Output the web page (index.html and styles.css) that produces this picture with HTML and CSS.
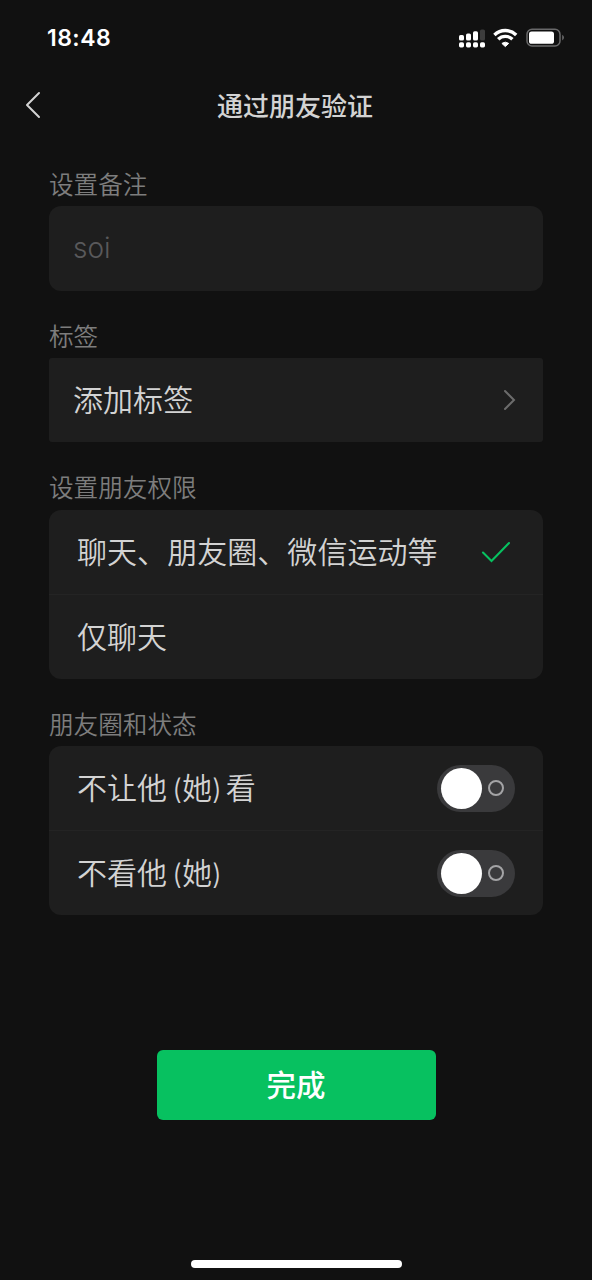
FILE: index.html
```html
<!DOCTYPE html>
<html lang="zh-CN">
<head>
<meta charset="utf-8">
<meta name="viewport" content="width=device-width, initial-scale=1">
<title>通过朋友验证</title>
<link rel="stylesheet" href="styles.css">
</head>
<body>
<div class="screen">
  <div class="status">
    <span class="time">18:48</span>
    <svg class="status-icons" width="108" height="22" viewBox="0 0 108 22">
      <g fill="#fff">
        <rect x="1" y="8" width="5" height="5.6" rx="1.6"/>
        <rect x="8" y="6.6" width="5" height="7" rx="1.6"/>
        <rect x="15" y="4.2" width="5" height="9.4" rx="1.6"/>
        <rect x="22" y="2.4" width="5" height="11.2" rx="1.6" fill="#3d3d3d"/>
        <rect x="1" y="15.2" width="5" height="5.2" rx="1.6"/>
        <rect x="8" y="15.2" width="5" height="5.2" rx="1.6"/>
        <rect x="15" y="15.2" width="5" height="5.2" rx="1.6"/>
        <rect x="22" y="15.2" width="5" height="5.2" rx="1.6"/>
        <path d="M43.9 16.4Q47.3 13.9 50.7 16.4L47.3 19.6Z" stroke="#fff" stroke-width="1" stroke-linejoin="round"/>
      </g>
      <g fill="none" stroke="#fff" stroke-width="3.4">
        <path d="M36.4 7.9A15.8 15.8 0 0 1 58.2 7.9"/>
        <path d="M40.2 12.3A10 10 0 0 1 54.4 12.3"/>
      </g>
      <rect x="69" y="2.2" width="33" height="16.8" rx="5" fill="none" stroke="#69696a" stroke-width="1.5"/>
      <rect x="71" y="4.4" width="25" height="12.4" rx="2.6" fill="#fff"/>
      <path d="M104.2 7.8Q106 8.8 106 10.6T104.2 13.4Z" fill="#69696a"/>
    </svg>
  </div>
  <header class="nav">
    <svg class="back" width="16" height="28" viewBox="0 0 16 28"><path d="M14 2L2 14L14 26" fill="none" stroke="#d3d3d3" stroke-width="2" stroke-linecap="round" stroke-linejoin="round"/></svg>
    <h1 class="title">通过朋友验证</h1>
  </header>
  <main class="form">
    <section class="section">
      <h2 class="label">设置备注</h2>
      <div class="card"><div class="row row-tight"><span class="placeholder">soi</span></div></div>
    </section>
    <section class="section">
      <h2 class="label">标签</h2>
      <div class="card card-square"><div class="row row-tight"><span class="text">添加标签</span>
        <svg class="chevron" width="14" height="22" viewBox="0 0 14 22"><path d="M2 2L11 11L2 20" fill="none" stroke="#6c6c6c" stroke-width="2" stroke-linecap="round"/></svg>
      </div></div>
    </section>
    <section class="section">
      <h2 class="label">设置朋友权限</h2>
      <div class="card">
        <div class="row"><span class="text">聊天、朋友圈、微信运动等</span>
          <svg class="check" width="30" height="22" viewBox="0 0 30 22"><path d="M2 11.5L10.5 20L28 2" fill="none" stroke="#07c160" stroke-width="2.1" stroke-linecap="round"/></svg>
        </div>
        <div class="row"><span class="text">仅聊天</span></div>
      </div>
    </section>
    <section class="section">
      <h2 class="label">朋友圈和状态</h2>
      <div class="card">
        <div class="row"><span class="text">不让他<span class="paren open">(</span>她<span class="paren close">)</span>看</span><span class="switch"><span class="knob"></span><span class="ring"></span></span></div>
        <div class="row"><span class="text">不看他<span class="paren open">(</span>她<span class="paren close">)</span></span><span class="switch"><span class="knob"></span><span class="ring"></span></span></div>
      </div>
    </section>
  </main>
  <button class="done">完成</button>
  <div class="home"></div>
</div>
</body>
</html>
```
FILE: styles.css
```css
* { box-sizing: border-box; margin: 0; padding: 0; }
body {
  background: #111;
  color: #d3d3d3;
  font-family: Inter, "Noto Sans CJK SC", sans-serif;
}
.screen { display: flex; flex-direction: column; width: 592px; height: 1280px; }
.status {
  display: flex; align-items: center; justify-content: space-between;
  height: 76px; padding: 0 26px 0 47px; color: #fff;
}
.time { font-size: 23px; font-weight: 600; letter-spacing: 0.45px; }
.nav {
  display: grid; grid-template-columns: 60px 1fr 62px; align-items: center;
  height: 58px;
}
.back { margin-left: 25px; }
.title { padding-top: 3px; text-align: center; font-size: 26px; line-height: 38px; font-weight: 500; }
.form { padding: 5px 49px 0; }
.label {
  height: 67.2px; padding: 28px 0 0;
  font-size: 24.6px; line-height: 36px; font-weight: 350; color: #7d7d7d;
}
.card { overflow: hidden; border-radius: 12px; background: #1e1e1e; }
.card-square { border-radius: 3px; }
.row {
  display: flex; align-items: center; justify-content: space-between;
  height: 84.5px; padding: 0 28px 0 28px;
}
.row + .row { border-top: 1px solid #242424; }
.row-tight { padding: 0 26px 0 24px; }
.text { font-size: 30px; line-height: 44px; font-weight: 350; letter-spacing: 0.05px; white-space: nowrap; }
.placeholder { font-size: 28px; font-weight: 350; color: #59595b; }
.check { margin-right: 4px; }
.paren { display: inline-block; font-size: 28px; }
.open { margin-left: 5px; }
.close { margin-right: 4px; }
.switch {
  display: flex; align-items: center; gap: 6px;
  width: 78px; height: 47px; padding: 0 10px 0 4px;
  border-radius: 24px; background: #3a3a3c;
}
.knob { flex: none; width: 41px; height: 41px; border-radius: 50%; background: #fff; }
.ring { flex: none; width: 16px; height: 16px; border: 2px solid #a4a4a6; border-radius: 50%; }
.done {
  align-self: center; width: 279px; height: 70px; margin-top: 135px;
  border: 0; border-radius: 6px; background: #07c160; color: #fff;
  font: 500 29.5px/44px Inter, "Noto Sans CJK SC", sans-serif;
}
.home {
  align-self: center; width: 211px; height: 8px; margin: auto 0 12px;
  border-radius: 4px; background: #fff;
}
```
